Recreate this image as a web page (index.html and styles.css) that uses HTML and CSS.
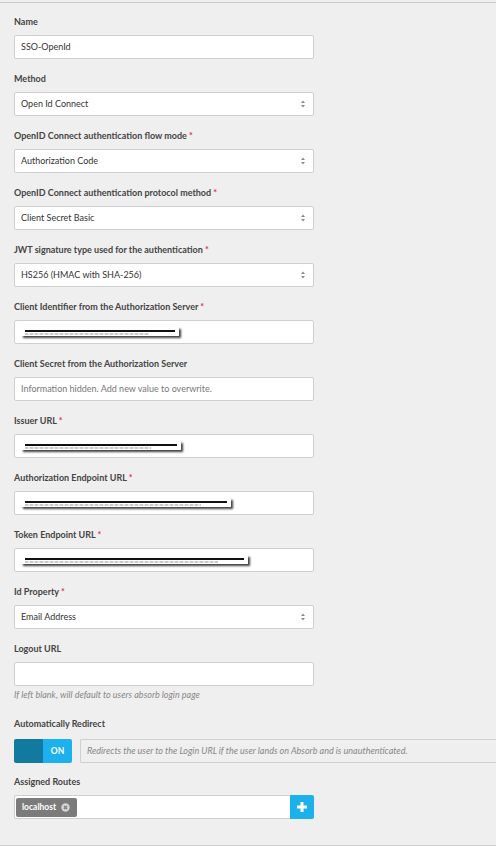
FILE: index.html
```html
<!DOCTYPE html>
<html>
<head>
<meta charset="utf-8">
<link rel="stylesheet" href="styles.css">
</head>
<body>
<div class="panel">
  <div class="field">
    <div class="label">Name</div>
    <div class="input">SSO-OpenId</div>
  </div>
  <div class="field">
    <div class="label">Method</div>
    <div class="input select">Open Id Connect<svg class="arr" width="6" height="10" viewBox="0 0 6 10"><path d="M3 1.5 L5 4 H1 Z M3 8.5 L5 6 H1 Z" fill="#8a8a8a"/></svg></div>
  </div>
  <div class="field">
    <div class="label">OpenID Connect authentication flow mode <span class="req">*</span></div>
    <div class="input select">Authorization Code<svg class="arr" width="6" height="10" viewBox="0 0 6 10"><path d="M3 1.5 L5 4 H1 Z M3 8.5 L5 6 H1 Z" fill="#8a8a8a"/></svg></div>
  </div>
  <div class="field">
    <div class="label">OpenID Connect authentication protocol method <span class="req">*</span></div>
    <div class="input select">Client Secret Basic<svg class="arr" width="6" height="10" viewBox="0 0 6 10"><path d="M3 1.5 L5 4 H1 Z M3 8.5 L5 6 H1 Z" fill="#8a8a8a"/></svg></div>
  </div>
  <div class="field">
    <div class="label">JWT signature type used for the authentication <span class="req">*</span></div>
    <div class="input select">HS256 (HMAC with SHA-256)<svg class="arr" width="6" height="10" viewBox="0 0 6 10"><path d="M3 1.5 L5 4 H1 Z M3 8.5 L5 6 H1 Z" fill="#8a8a8a"/></svg></div>
  </div>
  <div class="field">
    <div class="label">Client Identifier from the Authorization Server <span class="req">*</span></div>
    <div class="input redacted-input"><span class="redact" style="width:158px"></span></div>
  </div>
  <div class="field">
    <div class="label">Client Secret from the Authorization Server</div>
    <div class="input placeholder">Information hidden. Add new value to overwrite.</div>
  </div>
  <div class="field">
    <div class="label">Issuer URL <span class="req">*</span></div>
    <div class="input redacted-input"><span class="redact" style="width:160px"></span></div>
  </div>
  <div class="field">
    <div class="label">Authorization Endpoint URL <span class="req">*</span></div>
    <div class="input redacted-input"><span class="redact" style="width:210px"></span></div>
  </div>
  <div class="field">
    <div class="label">Token Endpoint URL <span class="req">*</span></div>
    <div class="input redacted-input"><span class="redact" style="width:227px"></span></div>
  </div>
  <div class="field">
    <div class="label">Id Property <span class="req">*</span></div>
    <div class="input select">Email Address<svg class="arr" width="6" height="10" viewBox="0 0 6 10"><path d="M3 1.5 L5 4 H1 Z M3 8.5 L5 6 H1 Z" fill="#8a8a8a"/></svg></div>
  </div>
  <div class="field field-tight">
    <div class="label">Logout URL</div>
    <div class="input"></div>
    <div class="hint">If left blank, will default to users absorb login page</div>
  </div>
  <div class="field field-toggle">
    <div class="label">Automatically Redirect</div>
    <div class="toggle-row">
      <div class="toggle"><span class="tg-off"></span><span class="tg-on">ON</span></div>
      <div class="desc">Redirects the user to the Login URL if the user lands on Absorb and is unauthenticated.</div>
    </div>
  </div>
  <div class="field">
    <div class="label">Assigned Routes</div>
    <div class="routes">
      <div class="routes-box">
        <span class="tag">localhost<svg class="tag-x" width="9" height="9" viewBox="0 0 9 9"><circle cx="4.5" cy="4.5" r="4.2" fill="#d4d4d4"/><path d="M3 3 L6 6 M6 3 L3 6" stroke="#7b7b7b" stroke-width="1.2"/></svg></span>
      </div>
      <div class="plus"><svg width="12" height="12" viewBox="0 0 12 12"><path d="M6 1 V11 M1 6 H11" stroke="#fff" stroke-width="3"/></svg></div>
    </div>
  </div>
</div>
</body>
</html>
```

FILE: styles.css
```css
html, body {
  margin: 0;
  padding: 0;
  overflow: hidden;
  background: #efefef;
}
body {
  font-family: Lato, "Open Sans", sans-serif;
  color: #444;
}
.panel {
  margin-top: 2px;
  border-top: 1px solid #c6cdcb;
  border-bottom: 1px solid #cfcfcf;
  padding: 13px 0 0 14px;
  box-sizing: border-box;
  height: 844px;
}
.field {
  margin-bottom: 14px;
}
.label {
  font-size: 9px;
  font-weight: bold;
  line-height: 12px;
  height: 12px;
  margin-bottom: 7px;
  color: #444;
}
.req {
  color: #e0344f;
}
.input {
  width: 300px;
  height: 24px;
  box-sizing: border-box;
  background: #fff;
  border: 1px solid #cfcfcf;
  border-radius: 2px;
  padding: 0 0 0 6px;
  font-size: 9px;
  line-height: 22px;
  color: #333;
  display: flex;
  align-items: center;
}
.select {
  justify-content: space-between;
  padding-right: 7px;
}
.arr {
  display: block;
}
.placeholder {
  color: #777;
}
.redact {
  display: block;
  height: 9px;
  background: #fff;
  box-shadow: 2px 2px 2px rgba(0,0,0,0.75);
  position: relative;
  margin-top: -1px;
}
.redact::before {
  content: "";
  position: absolute;
  left: 4px;
  right: 4px;
  top: 3px;
  height: 2px;
  background: #111;
}
.redact::after {
  content: "";
  position: absolute;
  left: 4px;
  right: 30px;
  top: 6px;
  height: 2px;
  background: repeating-linear-gradient(90deg, #888 0 3px, #ccc 3px 5px);
  opacity: 0.45;
}
.field-tight {
  margin-bottom: 17px;
}
.hint {
  font-size: 9px;
  font-style: italic;
  color: #888;
  margin-top: 3px;
  line-height: 12px;
}
.field-toggle .label {
  margin-bottom: 9px;
}
.field-toggle {
  margin-bottom: 13px;
}
.toggle-row {
  display: flex;
  gap: 8px;
}
.toggle {
  display: flex;
  width: 58px;
  height: 24px;
  border-radius: 2px;
  overflow: hidden;
  flex: none;
}
.tg-off {
  width: 29px;
  background: #12799f;
}
.tg-on {
  width: 29px;
  background: #1cb0ec;
  color: #fff;
  font-size: 8.5px;
  font-weight: bold;
  display: flex;
  align-items: center;
  justify-content: center;
}
.desc {
  flex: 1;
  min-width: 0;
  height: 24px;
  box-sizing: border-box;
  border: 1px solid #cfcfcf;
  border-right: none;
  border-radius: 2px 0 0 2px;
  font-size: 9px;
  font-style: italic;
  color: #888;
  line-height: 22px;
  padding-left: 6px;
  white-space: nowrap;
  overflow: hidden;
}
.routes {
  display: flex;
  width: 300px;
  height: 24px;
}
.routes-box {
  flex: 1;
  background: #fff;
  border: 1px solid #cfcfcf;
  border-right: none;
  border-radius: 2px 0 0 2px;
  box-sizing: border-box;
  padding: 1px;
  display: flex;
  align-items: center;
}
.tag {
  display: flex;
  align-items: center;
  gap: 5px;
  height: 19px;
  background: #7b7b7b;
  border-radius: 2px;
  color: #fff;
  font-size: 8.5px;
  font-weight: bold;
  padding: 0 4px 0 6px;
  box-sizing: border-box;
  width: 61px;
}
.tag-x {
  display: block;
}
.plus {
  width: 24px;
  background: #1cb0ec;
  border-radius: 0 2px 2px 0;
  display: flex;
  align-items: center;
  justify-content: center;
}
```
